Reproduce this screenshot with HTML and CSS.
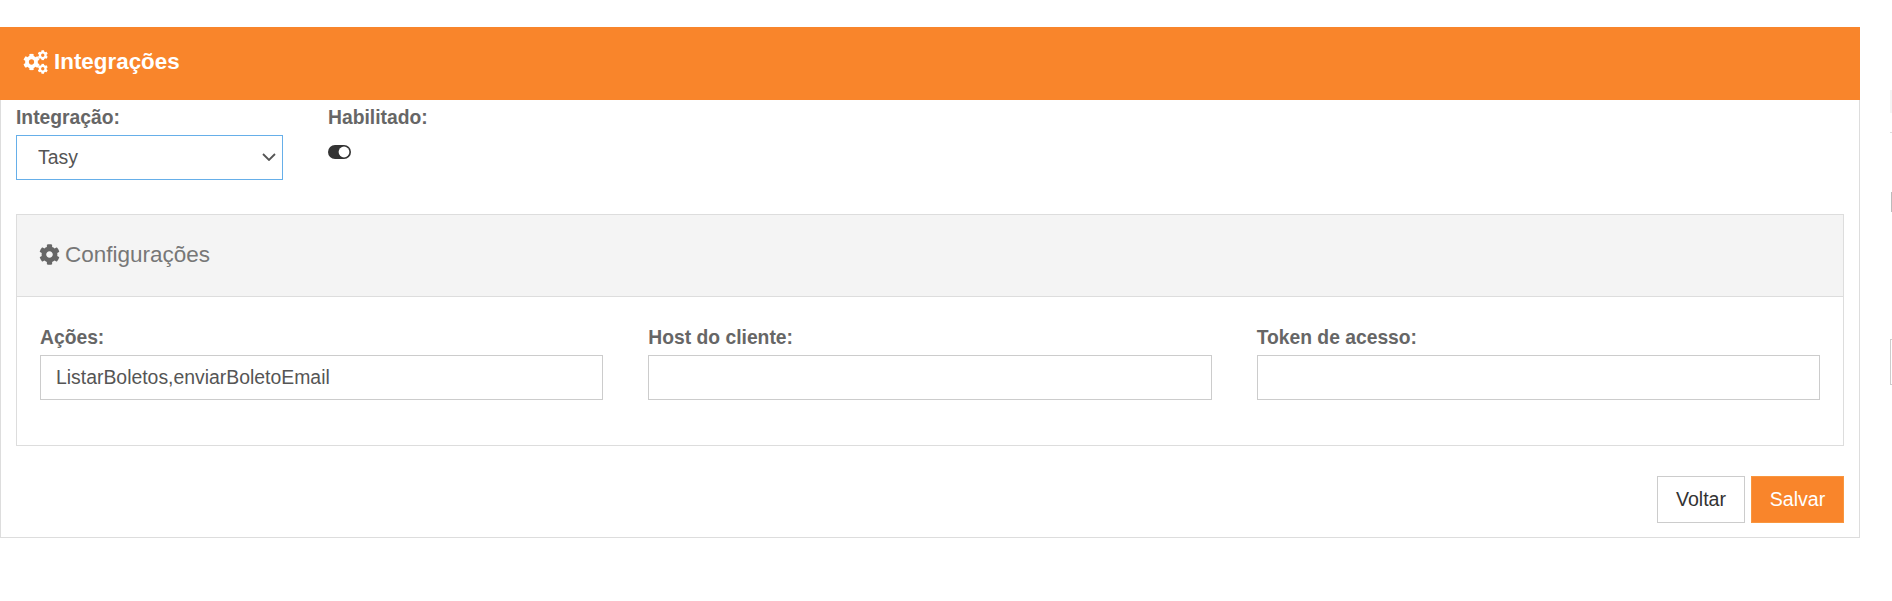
FILE: index.html
```html
<!DOCTYPE html>
<html lang="pt-BR">
<head>
<meta charset="utf-8">
<title>Integrações</title>
<link rel="stylesheet" href="styles.css">
</head>
<body>
<svg class="defs" width="0" height="0" aria-hidden="true">
  <symbol id="cog" viewBox="0 0 512 512">
    <path d="M487.4 315.7l-42.6-24.6c4.3-23.2 4.3-47 0-70.2l42.6-24.6c4.9-2.8 7.1-8.6 5.5-14-11.1-35.6-30-67.8-54.7-94.6-3.8-4.1-10-5.1-14.8-2.3L380.8 110c-17.9-15.4-38.5-27.3-60.8-35.1V25.8c0-5.6-3.9-10.5-9.4-11.7-36.7-8.2-74.3-7.8-109.2 0-5.5 1.2-9.4 6.1-9.4 11.7V75c-22.2 7.9-42.8 19.8-60.8 35.1L88.7 85.5c-4.9-2.8-11-1.9-14.8 2.3-24.7 26.7-43.6 58.9-54.7 94.6-1.7 5.4.6 11.2 5.5 14L67.3 221c-4.3 23.2-4.3 47 0 70.2l-42.6 24.6c-4.9 2.8-7.1 8.6-5.5 14 11.1 35.6 30 67.8 54.7 94.6 3.8 4.1 10 5.1 14.8 2.3l42.6-24.6c17.9 15.4 38.5 27.3 60.8 35.1v49.2c0 5.6 3.9 10.5 9.4 11.7 36.7 8.2 74.3 7.8 109.2 0 5.5-1.2 9.4-6.1 9.4-11.7v-49.2c22.2-7.9 42.8-19.8 60.8-35.1l42.6 24.6c4.9 2.8 11 1.9 14.8-2.3 24.7-26.7 43.6-58.9 54.7-94.6 1.5-5.5-.7-11.3-5.6-14.1zM256 336c-44.1 0-80-35.9-80-80s35.9-80 80-80 80 35.9 80 80-35.9 80-80 80z"/>
  </symbol>
</svg>
<div class="page">
  <main class="panel">
    <header class="panel-head">
      <svg class="cogs" viewBox="0 0 25 24" aria-hidden="true">
        <use href="#cog" x="0" y="3.5" width="17" height="17"/>
        <use href="#cog" x="14.5" y="0" width="10.5" height="10.5"/>
        <use href="#cog" x="14.5" y="13.5" width="10.5" height="10.5"/>
      </svg>
      <h1 class="panel-title">Integrações</h1>
    </header>
    <div class="panel-body">
      <div class="top-row">
        <div class="field-select">
          <label class="label" for="integ">Integração:</label>
          <div class="select-wrap">
            <select id="integ" class="select"><option>Tasy</option></select>
            <svg class="chevron" viewBox="0 0 14 8" aria-hidden="true"><path d="M1 1l6 6 6-6"/></svg>
          </div>
        </div>
        <div class="field-toggle">
          <span class="label">Habilitado:</span>
          <svg class="toggle" viewBox="0 0 24 14" aria-hidden="true">
            <rect x="0" y="0" width="23" height="14" rx="7" class="toggle-track"/>
            <circle cx="16" cy="7" r="5.4" class="toggle-knob"/>
          </svg>
        </div>
      </div>

      <section class="config">
        <div class="config-head">
          <svg class="cog-one" viewBox="0 0 512 512" aria-hidden="true"><use href="#cog"/></svg>
          <h2 class="config-title">Configurações</h2>
        </div>
        <div class="config-body">
          <div class="field">
            <label class="label" for="acoes">Ações:</label>
            <input id="acoes" class="input" type="text" value="ListarBoletos,enviarBoletoEmail">
          </div>
          <div class="field">
            <label class="label" for="host">Host do cliente:</label>
            <input id="host" class="input" type="text">
          </div>
          <div class="field">
            <label class="label" for="token">Token de acesso:</label>
            <input id="token" class="input" type="text">
          </div>
        </div>
      </section>

      <div class="actions">
        <button class="btn btn-back" type="button">Voltar</button>
        <button class="btn btn-save" type="button">Salvar</button>
      </div>
    </div>
  </main>
  <aside class="side">
    <div class="side-fill"></div>
    <div class="side-rule"></div>
    <div class="side-thin"></div>
    <div class="side-box"></div>
  </aside>
</div>
</body>
</html>
```

FILE: styles.css
```css
* { box-sizing: border-box; }
html, body { margin: 0; padding: 0; background: #fff; overflow: hidden; }
body {
  width: 1892px;
  height: 601px;
  font-family: "Liberation Sans", Arial, sans-serif;
  font-size: 16px;
  color: #555;
}
.defs { position: absolute; }
.page { display: flex; padding-top: 27px; }

.panel {
  flex: 0 0 1860px;
  height: 511px;
  border: 1px solid #ddd;
  border-top: 0;
  display: flex;
  flex-direction: column;
}
.panel-head {
  height: 73px;
  margin: 0 -1px;
  background: #f9852b;
  color: #fff;
  display: flex;
  align-items: center;
  padding-left: 23px;
  padding-bottom: 4px;
  gap: 6px;
}
.cogs { width: 25px; height: 24px; fill: #fff; }
.panel-title { margin: 0; font-size: 22.4px; font-weight: 700; line-height: 24px; }

.panel-body { flex: 1; padding: 5px 15px 0; display: flex; flex-direction: column; }

.top-row { display: flex; height: 109px; }
.label {
  display: block;
  font-weight: 700;
  font-size: 19.3px;
  line-height: 22px;
  color: #666;
}
.field-select { width: 267px; margin-right: 45px; padding-top: 2px; }
.field-toggle { padding-top: 2px; }
.select-wrap { position: relative; margin-top: 6px; }
.select {
  display: block;
  width: 100%;
  height: 45px;
  appearance: none;
  -webkit-appearance: none;
  background: #fff;
  border: 1px solid #66afe9;
  border-radius: 0;
  padding: 0 0 2px 21px;
  font: 19.4px "Liberation Sans", Arial, sans-serif;
  color: #555;
  outline: none;
}
.chevron {
  position: absolute;
  right: 7px;
  top: 18px;
  width: 14px;
  height: 8px;
  fill: none;
  stroke: #555;
  stroke-width: 1.8;
}
.toggle { display: block; width: 24px; height: 14px; margin-top: 16px; }
.toggle-track { fill: #333; }
.toggle-knob { fill: #fff; }

.config { border: 1px solid #ddd; height: 232px; }
.config-head {
  height: 82px;
  background: #f4f4f4;
  border-bottom: 1px solid #ddd;
  display: flex;
  align-items: center;
  padding-left: 22px;
  padding-bottom: 2px;
  gap: 5px;
}
.cog-one { width: 21px; height: 21px; fill: #666; }
.config-title { margin: 0; font-size: 22.5px; font-weight: 400; color: #777; line-height: 24px; }
.config-body {
  display: grid;
  grid-template-columns: repeat(3, 1fr);
  column-gap: 45px;
  padding: 30px 23px 0;
}
.input {
  display: block;
  width: 100%;
  height: 45px;
  margin-top: 6px;
  border: 1px solid #ccc;
  border-radius: 0;
  padding: 0 15px;
  font: 19.4px "Liberation Sans", Arial, sans-serif;
  color: #555;
  background: #fff;
  outline: none;
}
.actions { display: flex; justify-content: flex-end; gap: 6px; margin-top: 30px; }
.btn {
  height: 47px;
  font: 19.6px "Liberation Sans", Arial, sans-serif;
  border-radius: 0;
  padding: 0;
}
.btn-back { width: 88px; background: #fff; border: 1px solid #ccc; color: #333; }
.btn-save { width: 93px; background: #f9852b; border: 1px solid #f9963e; color: #fff; }

.side { flex: 0 0 32px; margin-left: 30px; }
.side-fill { height: 23px; margin-top: 63px; background: #f4f4f4; }
.side-rule { height: 1px; margin-top: 19px; background: #ddd; }
.side-thin { height: 20px; margin: 59px 0 0 1px; border-left: 1px solid #bbb; }
.side-box { height: 46px; margin-top: 127px; border: 1px solid #ccc; }
```
